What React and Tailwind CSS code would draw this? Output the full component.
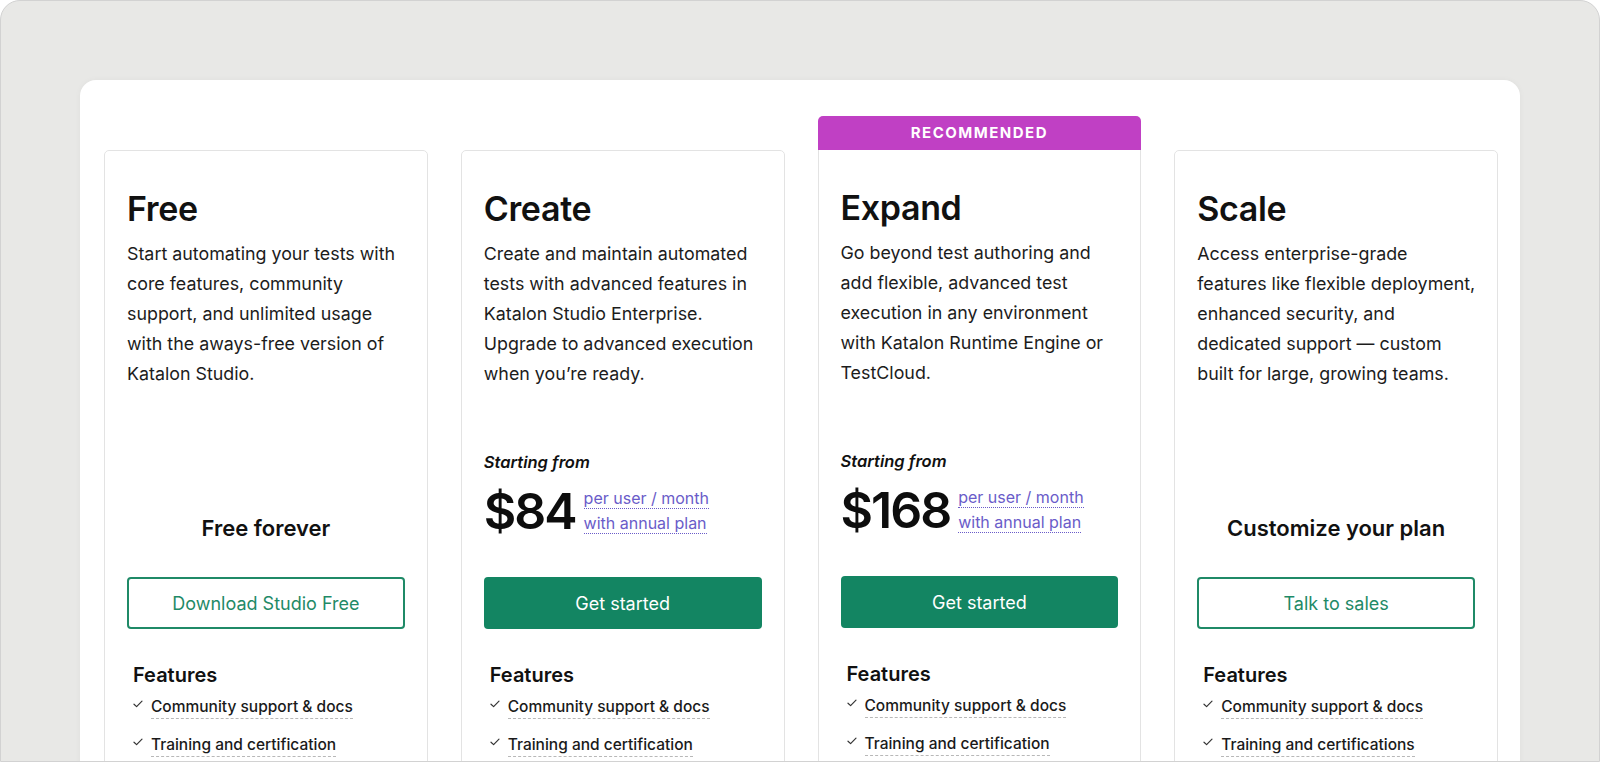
import React from 'react';

const plans = [
  {
    name: 'Free',
    desc: [
      'Start automating your tests with',
      'core features, community',
      'support, and unlimited usage',
      'with the aways-free version of',
      'Katalon Studio.',
    ],
    label: 'Free forever',
    cta: 'Download Studio Free',
    outline: true,
    features: ['Community support & docs', 'Training and certification'],
  },
  {
    name: 'Create',
    desc: [
      'Create and maintain automated',
      'tests with advanced features in',
      'Katalon Studio Enterprise.',
      'Upgrade to advanced execution',
      'when you’re ready.',
    ],
    price: '$84',
    cta: 'Get started',
    features: ['Community support & docs', 'Training and certification'],
  },
  {
    name: 'Expand',
    recommended: true,
    desc: [
      'Go beyond test authoring and',
      'add flexible, advanced test',
      'execution in any environment',
      'with Katalon Runtime Engine or',
      'TestCloud.',
    ],
    price: '$168',
    cta: 'Get started',
    features: ['Community support & docs', 'Training and certification'],
  },
  {
    name: 'Scale',
    desc: [
      'Access enterprise-grade',
      'features like flexible deployment,',
      'enhanced security, and',
      'dedicated support — custom',
      'built for large, growing teams.',
    ],
    label: 'Customize your plan',
    cta: 'Talk to sales',
    outline: true,
    features: ['Community support & docs', 'Training and certifications'],
  },
];

const Check = () => (
  <svg width="10" height="8" viewBox="0 0 10 8" fill="none" className="shrink-0 mt-[3px]">
    <path d="M1 4.2L3.6 6.6L9 1.2" stroke="#333" strokeWidth="1.2" strokeLinecap="round" strokeLinejoin="round" />
  </svg>
);

const PlanCard = ({ plan }) => (
  <div className="flex flex-col">
    {/* Badge slot */}
    <div className="h-[34px] flex items-end">
      {plan.recommended && (
        <div className="w-full h-[34px] bg-[#c040c4] rounded-t-[5px] flex items-center justify-center text-white text-[15px] font-bold tracking-[0.1em]">
          RECOMMENDED
        </div>
      )}
    </div>

    <div className={`border border-[#e3e3e3] bg-white px-[22px] pt-[38px] h-[640px] ${plan.recommended ? 'rounded-b-[5px] border-t-0' : 'rounded-[5px]'}`}>
      <h2 className="text-[34px] leading-[40px] font-semibold tracking-[-0.01em] text-[#111]">{plan.name}</h2>

      <div className="mt-[10px] h-[200px] text-[17.85px] leading-[30px] text-[#1c1c1c]">
        {plan.desc.map((line, i) => (
          <div key={i} className="whitespace-nowrap">{line}</div>
        ))}
      </div>

      <div className={`h-[115px] flex flex-col ${plan.price ? 'pt-[11px]' : 'justify-end pb-[11px]'}`}>
        {plan.price ? (
          <>
            <p className="text-[16.5px] leading-[24px] italic font-semibold text-[#111]">Starting from</p>
            <div className="mt-[11px] flex items-start gap-[8px]">
              <span className="text-[50px] leading-[52px] font-semibold tracking-[-0.04em] text-[#0d0d0d]">{plan.price}</span>
              <div className="pt-[1px] text-[16px] leading-[25px] text-[#6a5cc9]">
                <div>
                  <span className="border-b border-dotted border-[#6a5cc9]">per user / month</span>
                </div>
                <div>
                  <span className="border-b border-dotted border-[#6a5cc9]">with annual plan</span>
                </div>
              </div>
            </div>
          </>
        ) : (
          <p className="text-center text-[22px] leading-[30px] font-semibold text-[#111]">{plan.label}</p>
        )}
      </div>

      <button
        className={`mt-[23px] w-full h-[52px] rounded-[4px] text-[18px] ${
          plan.outline
            ? 'border-2 border-[#1f8a67] text-[#1f8a67] bg-white'
            : 'bg-[#138562] text-white'
        }`}
      >
        {plan.cta}
      </button>

      <div className="px-[6px] mt-[34px]">
        <h3 className="text-[20px] leading-[24px] font-semibold text-[#111]">Features</h3>
        <ul className="mt-[10px] flex flex-col gap-[16px]">
          {plan.features.map((f) => (
            <li key={f} className="flex items-start gap-[8px]">
              <Check />
              <span className="text-[15.5px] leading-[20px] font-medium text-[#1a1a1a] pb-[1px] border-b border-dashed border-[#b8b8b8]">
                {f}
              </span>
            </li>
          ))}
        </ul>
      </div>
    </div>
  </div>
);

export default function App() {
  return (
    <div className="w-[1600px] h-[762px] bg-white" style={{ fontFamily: 'Inter, "Noto Sans", sans-serif' }}>
      <div className="h-full bg-[#e8e8e6] border border-[#d2d2d2] rounded-t-[20px] overflow-hidden px-[79px] pt-[79px]">
        <div className="bg-white rounded-t-[16px] shadow-[0_0_6px_rgba(0,0,0,0.04)] h-[720px] pl-[24px] pr-[22px] pt-[36px]">
          <div className="grid grid-cols-4 gap-[33px]">
            {plans.map((p) => (
              <PlanCard key={p.name} plan={p} />
            ))}
          </div>
        </div>
      </div>
    </div>
  );
}
